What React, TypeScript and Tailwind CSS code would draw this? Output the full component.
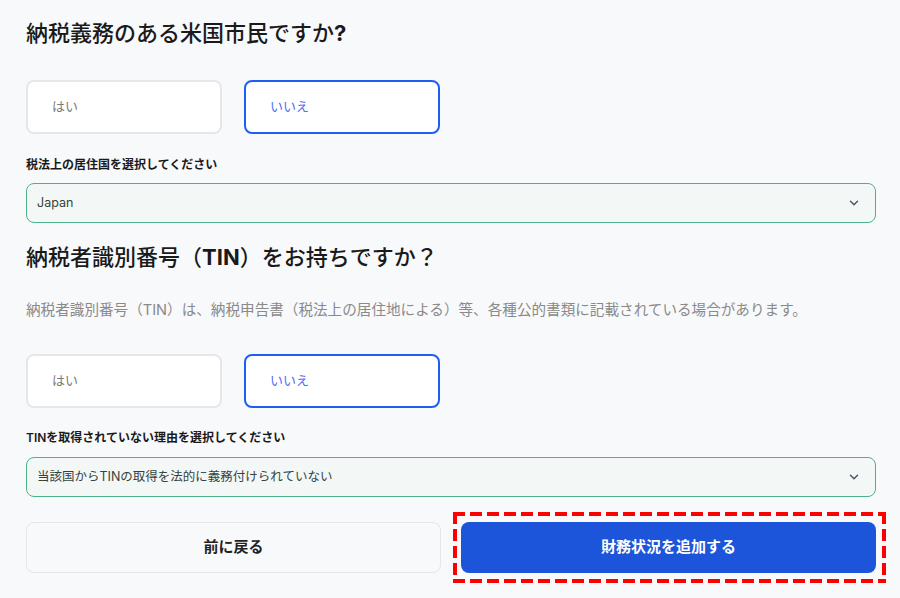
import { ChevronDown } from "lucide-react";

const font = { fontFamily: 'Inter, "Noto Sans CJK JP", sans-serif' };

function Choice({ label, selected }: { label: string; selected?: boolean }) {
  return (
    <div
      className={`flex h-[54px] w-[196px] items-center rounded-lg bg-white px-[24px] text-[13px] ${
        selected ? "border-2 border-[#1f5ef6] text-[#4f6ef0]" : "border-2 border-[#e6e7ea] text-[#7a7a7a]"
      }`}
    >
      {label}
    </div>
  );
}

function SelectBox({ value }: { value: string }) {
  return (
    <div className="flex h-[40px] items-center justify-between rounded-lg border-[1.5px] border-[#4db38b] bg-[#f3f8f6] pl-[10px] pr-[14px] text-[12.5px] text-[#34423d]">
      <span>{value}</span>
      <ChevronDown className="size-[14px] text-[#4b5563]" strokeWidth={2.5} />
    </div>
  );
}

export default function App() {
  return (
    <div className="min-h-[598px] bg-[#f8f9fb] pl-[26px] pr-[24px] pt-[17px] text-[#1a1a1a]" style={font}>
      <h1 className="text-[22px] leading-[32px] font-medium">
        納税義務のある米国市民ですか<span className="font-bold">?</span>
      </h1>

      <div className="mt-[31px] flex gap-[22px]">
        <Choice label="はい" />
        <Choice label="いいえ" selected />
      </div>

      <div className="mt-[22px] text-[12px] leading-[18px] font-semibold">税法上の居住国を選択してください</div>
      <div className="mt-[9px]">
        <SelectBox value="Japan" />
      </div>

      <h2 className="mt-[18px] text-[22px] leading-[32px] font-medium">
        納税者識別番号（<span className="font-bold">TIN</span>）をお持ちですか？
      </h2>

      <p className="mt-[26px] text-[14.6px] leading-[22px] text-[#8a8a8a]">
        納税者識別番号（TIN）は、納税申告書（税法上の居住地による）等、各種公的書類に記載されている場合があります。
      </p>

      <div className="mt-[33px] flex gap-[22px]">
        <Choice label="はい" />
        <Choice label="いいえ" selected />
      </div>

      <div className="mt-[21px] text-[12px] leading-[18px] font-semibold">
        TINを取得されていない理由を選択してください
      </div>
      <div className="mt-[10px]">
        <SelectBox value="当該国からTINの取得を法的に義務付けられていない" />
      </div>

      <div className="mt-[25px] grid grid-cols-2 gap-[20px]">
        <button className="h-[51px] rounded-lg border border-[#e4e6e9] bg-[#f8f9fb] text-[15px] font-semibold text-[#222]">
          前に戻る
        </button>
        {/* red dashed highlight frame; negative margins keep the button where the grid puts it */}
        <div className="-mt-[10px] -mr-[10px] -mb-[10px] -ml-[8px] pt-[10px] pr-[10px] pb-[10px] pl-[8px] [background:linear-gradient(90deg,#ff0000_12px,transparent_0)_0_0/17px_4px_repeat-x,linear-gradient(90deg,#ff0000_12px,transparent_0)_0_100%/17px_4px_repeat-x,linear-gradient(#ff0000_12px,transparent_0)_0_0/4px_17px_repeat-y,linear-gradient(#ff0000_12px,transparent_0)_100%_0/4px_17px_repeat-y]">
          <button className="h-[51px] w-full rounded-lg bg-[#1c55d9] text-[15px] font-semibold text-white">
            財務状況を追加する
          </button>
        </div>
      </div>
    </div>
  );
}
